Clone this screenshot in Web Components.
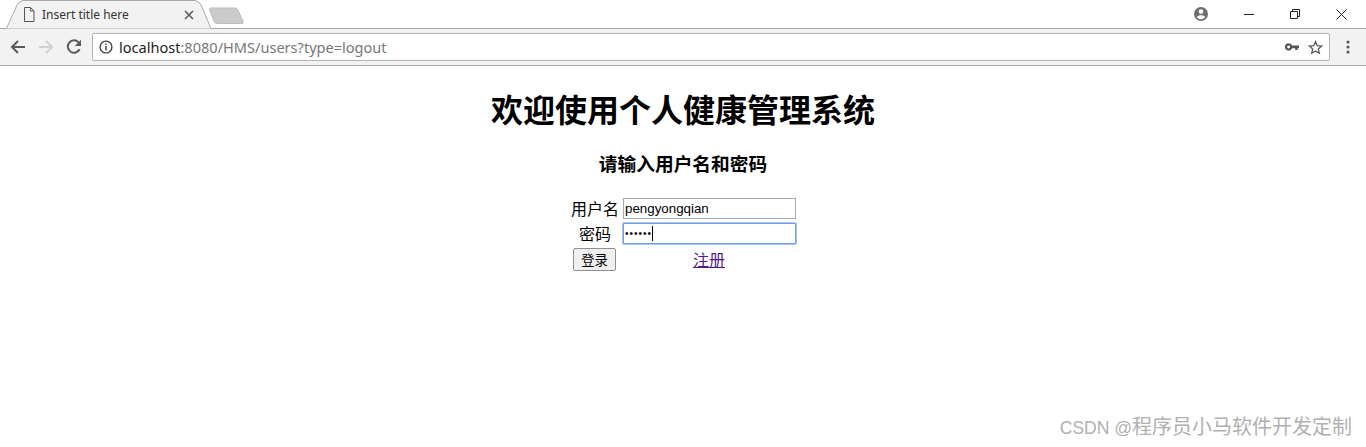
<!DOCTYPE html>
<html lang="zh">
<head>
<meta charset="utf-8">
<title>Insert title here</title>
<style>
    html, body { margin: 0; background: #fff; }
    body { height: 447px; overflow: hidden; position: relative; font-family: "Liberation Sans", "Noto Sans CJK SC", sans-serif; }
</style>
</head>
<body>
<browser-tabs></browser-tabs>
<browser-toolbar url-host="localhost" url-rest=":8080/HMS/users?type=logout"></browser-toolbar>
<login-page>
    <login-form></login-form>
</login-page>
<water-mark>CSDN @<span slot="name">程序员小马软件开发定制</span></water-mark>

<script>
// Barra de pestañas
class BrowserTabs extends HTMLElement {
    constructor() {
        super();
        this.attachShadow({ mode: 'open' });
        this.shadowRoot.innerHTML = `
            <style>
                :host { display: flex; height: 29px; position: relative; background: #fff; box-sizing: border-box; border-bottom: 1px solid #a9a9a9; }
                .tab { position: relative; width: 206px; height: 29px; margin-left: 6px; flex: none; }
                .shape { position: absolute; left: 0; top: 0; }
                .title { position: absolute; left: 36px; top: 7px; font: 12px/16px "Noto Sans", sans-serif; color: #333; white-space: nowrap; }
                .doc { position: absolute; left: 17px; top: 7px; }
                .close { position: absolute; left: 178px; top: 10px; }
                .new { margin: 7px 0 0 -4px; flex: none; }
                .spacer { flex: 1; }
                .ctl { width: 46px; height: 28px; display: flex; align-items: center; justify-content: center; flex: none; }
                .user { margin-right: 9px; width: 32px; }
                .end { margin-right: 2px; }
            </style>
            <div class="tab">
                <svg class="shape" width="206" height="29" viewBox="0 0 206 29">
                    <path d="M0.5 28.5 L11 5 Q13 1 17 0.5 L189 0.5 Q193 1 195 5 L205 28.5" fill="#f2f2f2" stroke="#a9a9a9"/>
                </svg>
                <svg class="doc" width="12" height="15" viewBox="0 0 12 15" fill="none" stroke="#555" stroke-width="1">
                    <path d="M1.5 0.5 H7.5 L11 4 V14.5 H1.5 Z M7.5 0.5 V4 H11"/>
                </svg>
                <span class="title">Insert title here</span>
                <svg class="close" width="10" height="10" viewBox="0 0 10 10" stroke="#5a5a5a" stroke-width="1.6">
                    <path d="M1 1 L9 9 M9 1 L1 9"/>
                </svg>
            </div>
            <svg class="new" width="36" height="18" viewBox="0 0 36 18">
                <path d="M1.5 2.5 Q1 1 3 1 L27 1 Q29 1 30 3 L35 14 Q36 16.5 34 16.5 L9 16.5 Q7 16.5 6 14.5 Z" fill="#cbcbcb" stroke="#bdbdbd"/>
            </svg>
            <div class="spacer"></div>
            <div class="ctl user">
                <svg width="14" height="14" viewBox="0 0 14 14">
                    <path fill="#6e6e6e" fill-rule="evenodd" d="M7 0a7 7 0 1 0 0 14A7 7 0 0 0 7 0Zm0 2.3a2.3 2.3 0 1 1 0 4.6 2.3 2.3 0 0 1 0-4.6Zm0 9.9a5.3 5.3 0 0 1-4.3-2.2C3.5 8.7 5.6 8.2 7 8.2s3.5.5 4.3 1.8A5.3 5.3 0 0 1 7 12.2Z"/>
                </svg>
            </div>
            <div class="ctl">
                <svg width="10" height="10" viewBox="0 0 10 10"><path d="M0 5.5 H10" stroke="#222" stroke-width="1"/></svg>
            </div>
            <div class="ctl">
                <svg width="10" height="10" viewBox="0 0 10 10" fill="none" stroke="#222"><path d="M0.5 2.5 H7.5 V9.5 H0.5 Z M2.5 2.5 V0.5 H9.5 V7.5 H7.5"/></svg>
            </div>
            <div class="ctl end">
                <svg width="11" height="11" viewBox="0 0 11 11" stroke="#222" stroke-width="1"><path d="M0.5 0.5 L10.5 10.5 M10.5 0.5 L0.5 10.5"/></svg>
            </div>
        `;
    }
}

// Barra de herramientas con la direccion
class BrowserToolbar extends HTMLElement {
    constructor() {
        super();
        this.attachShadow({ mode: 'open' });
        this.shadowRoot.innerHTML = `
            <style>
                :host { display: flex; align-items: center; height: 37px; box-sizing: border-box; background: #f2f2f2; border-bottom: 1px solid #a9a9a9; }
                .nav { display: flex; width: 28px; justify-content: center; flex: none; }
                .nav.first { margin-left: 4px; }
                .omnibox { flex: 1; height: 28px; margin-left: 4px; box-sizing: border-box; background: #fff; border: 1px solid #b4b4b4; border-radius: 2px; display: flex; align-items: center; padding: 0 6px 0 6px; }
                .url { font: 14.55px/18px "Noto Sans", sans-serif; color: #777; margin: 0 0 1px 6px; flex: 1; white-space: nowrap; }
                .url b { font-weight: 400; color: #222; }
                .key { margin-right: 9px; }
                .menu { width: 36px; display: flex; justify-content: center; flex: none; }
            </style>
            <div class="nav first">
                <svg width="16" height="14" viewBox="0 0 16 14" fill="none" stroke="#5a5a5a" stroke-width="2"><path d="M15 7 H2 M8 1 L2 7 L8 13"/></svg>
            </div>
            <div class="nav">
                <svg width="16" height="14" viewBox="0 0 16 14" fill="none" stroke="#d0d0d0" stroke-width="2"><path d="M1 7 H14 M8 1 L14 7 L8 13"/></svg>
            </div>
            <div class="nav">
                <svg width="16" height="16" viewBox="0 0 16 16" fill="none"><path d="M13.6 10.2 A6.2 6.2 0 1 1 12.6 3.4" stroke="#5a5a5a" stroke-width="2"/><path d="M15 0.8 V7 H8.8 Z" fill="#5a5a5a"/></svg>
            </div>
            <div class="omnibox">
                <svg width="14" height="14" viewBox="0 0 14 14"><circle cx="7" cy="7" r="5.9" fill="none" stroke="#444" stroke-width="1.4"/><path d="M7 6 V10.4 M7 3.4 V5" stroke="#444" stroke-width="1.5"/></svg>
                <span class="url"><b id="host"></b><span id="rest"></span></span>
                <svg class="key" width="14" height="8" viewBox="0 0 14 8"><path fill="#555" fill-rule="evenodd" d="M3.6 0.2a3.7 3.7 0 0 1 3.5 2.4H14V5.2H12.6V7H10.2V5.2H7.1A3.7 3.7 0 1 1 3.6 0.2Zm0 2.3a1.4 1.4 0 1 0 0 2.9 1.4 1.4 0 0 0 0-2.9Z"/></svg>
                <svg width="15" height="15" viewBox="0 0 15 15" fill="none" stroke="#5a5a5a" stroke-width="1.3"><path d="M7.5 1.6 L9.2 5.6 L13.6 6 L10.3 8.9 L11.3 13.2 L7.5 10.9 L3.7 13.2 L4.7 8.9 L1.4 6 L5.8 5.6 Z"/></svg>
            </div>
            <div class="menu">
                <svg width="4" height="14" viewBox="0 0 4 14" fill="#5a5a5a"><circle cx="2" cy="2" r="1.6"/><circle cx="2" cy="7" r="1.6"/><circle cx="2" cy="12" r="1.6"/></svg>
            </div>
        `;
        this.shadowRoot.getElementById('host').textContent = this.getAttribute('url-host');
        this.shadowRoot.getElementById('rest').textContent = this.getAttribute('url-rest');
    }
}

// Contenido de la pagina
class LoginPage extends HTMLElement {
    constructor() {
        super();
        this.attachShadow({ mode: 'open' });
        this.shadowRoot.innerHTML = `
            <style>
                :host { display: block; text-align: center; padding-top: 23px; color: #000; font-family: "Liberation Sans", "Noto Sans CJK SC", sans-serif; }
                h1 { font-size: 32px; line-height: 44px; margin: 0; }
                h3 { font-size: 18.72px; line-height: 26px; margin: 19px 0 20px; }
                .center { display: flex; justify-content: center; }
            </style>
            <h1>欢迎使用个人健康管理系统</h1>
            <h3>请输入用户名和密码</h3>
            <div class="center"><slot></slot></div>
        `;
    }
}

// Campo de texto
class FormField extends HTMLElement {
    constructor() {
        super();
        this.attachShadow({ mode: 'open' });
        this.shadowRoot.innerHTML = `
            <style>
                :host { display: flex; align-items: center; box-sizing: border-box; width: 173px; height: 21px; padding: 0 1px; background: #fff; border: 1px solid #a9a9a9; font: 13.33px "Liberation Sans", sans-serif; color: #000; }
                :host([focused]) { border: 1px solid #6d9ee8; box-shadow: 0 0 0 1px #a9c5f0; border-radius: 1px; }
                :host([focused]) .value { font-size: 10px; letter-spacing: 1px; }
                .caret { width: 1px; height: 15px; background: #000; display: none; }
                :host([focused]) .caret { display: block; }
            </style>
            <span class="value"><slot></slot></span><span class="caret"></span>
        `;
    }
}

// Formulario de acceso
class LoginForm extends HTMLElement {
    constructor() {
        super();
        this.attachShadow({ mode: 'open' });
        this.shadowRoot.innerHTML = `
            <style>
                :host { display: block; padding-left: 1px; font: 16px/21px "Liberation Sans", "Noto Sans CJK SC", sans-serif; color: #000; }
                .grid { display: grid; grid-template-columns: 48px 173px; column-gap: 4px; row-gap: 4px; justify-items: center; align-items: center; }
                .label, a { line-height: 19px; padding-top: 2px; }
                .btn { box-sizing: border-box; justify-self: start; margin-left: 2px; width: 43px; height: 23px; background: #efefef; border: 1px solid #8f8f8f; border-radius: 2px; font: 13.33px/21px "Noto Sans CJK SC", sans-serif; text-align: center; color: #000; }
                a { color: #551a8b; text-decoration: underline; margin-right: 1px; }
            </style>
            <div class="grid">
                <span class="label">用户名</span><form-field>pengyongqian</form-field>
                <span class="label">密码</span><form-field focused>••••••</form-field>
                <div class="btn">登录</div><a href="#">注册</a>
            </div>
        `;
    }
}

// Marca de agua
class WaterMark extends HTMLElement {
    constructor() {
        super();
        this.attachShadow({ mode: 'open' });
        this.shadowRoot.innerHTML = `
            <style>
                :host { position: absolute; right: 14px; bottom: 6px; font: 17.5px/26px "Liberation Sans", "Noto Sans CJK SC", sans-serif; color: #b0b0b0; white-space: nowrap; }
                ::slotted(span) { font-size: 20px; }
            </style>
            <slot></slot><slot name="name"></slot>
        `;
    }
}

customElements.define('browser-tabs', BrowserTabs);
customElements.define('browser-toolbar', BrowserToolbar);
customElements.define('login-page', LoginPage);
customElements.define('form-field', FormField);
customElements.define('login-form', LoginForm);
customElements.define('water-mark', WaterMark);
</script>
</body>
</html>
